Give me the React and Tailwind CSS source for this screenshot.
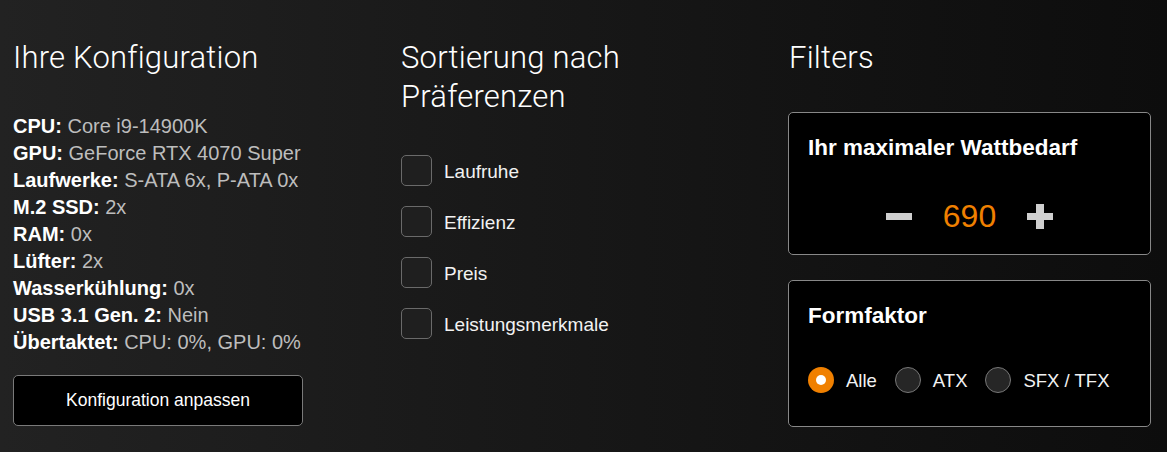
import React, { useState } from 'react';

const specs = [
  ['CPU:', 'Core i9-14900K'],
  ['GPU:', 'GeForce RTX 4070 Super'],
  ['Laufwerke:', 'S-ATA 6x, P-ATA 0x'],
  ['M.2 SSD:', '2x'],
  ['RAM:', '0x'],
  ['Lüfter:', '2x'],
  ['Wasserkühlung:', '0x'],
  ['USB 3.1 Gen. 2:', 'Nein'],
  ['Übertaktet:', 'CPU: 0%, GPU: 0%'],
];

const prefs = ['Laufruhe', 'Effizienz', 'Preis', 'Leistungsmerkmale'];
const forms = ['Alle', 'ATX', 'SFX / TFX'];

const titleFont = { fontFamily: 'Roboto, "Liberation Sans", sans-serif' };

export default function App() {
  const [checked, setChecked] = useState({});
  const [watt, setWatt] = useState(690);
  const [form, setForm] = useState('Alle');

  return (
    <div
      className="min-h-screen h-[452px] bg-gradient-to-r from-[#222222] via-[#171717] to-[#0d0d0d] text-white grid grid-cols-3"
      style={{ fontFamily: '"Liberation Sans", Arial, sans-serif' }}
    >
      {/* Konfiguration */}
      <div className="pl-[13px] pt-[38px]">
        <h2 style={titleFont} className="text-[31px] font-light leading-[39px] tracking-[0.2px]">
          Ihre Konfiguration
        </h2>
        <div className="mt-[36px] text-[20px] leading-[27px]">
          {specs.map(([k, v]) => (
            <div key={k} className="whitespace-nowrap">
              <span className="font-bold">{k}</span>{' '}
              <span className="text-[#bdbdbd]">{v}</span>
            </div>
          ))}
        </div>
        <button className="mt-[19px] w-[290px] h-[51px] bg-black border border-[#7a7a7a] rounded-[5px] text-[17.5px] text-white">
          Konfiguration anpassen
        </button>
      </div>

      {/* Sortierung */}
      <div className="pl-[12px] pt-[38px]">
        <h2 style={titleFont} className="text-[31px] font-light leading-[39px] tracking-[0.2px]">
          Sortierung nach
          <br />
          Präferenzen
        </h2>
        <div className="mt-[39px] flex flex-col gap-[19.5px]">
          {prefs.map((p) => (
            <label key={p} className="flex items-center gap-[12px] cursor-pointer">
              <span
                onClick={() => setChecked({ ...checked, [p]: !checked[p] })}
                className={`w-[31px] h-[31px] rounded-[5px] border border-[#6a6a6a] ${checked[p] ? 'bg-[#f08000]' : 'bg-[#1f1f1f]'}`}
              />
              <span className="text-[19px] text-[#f2f2f2] pt-[3px]">{p}</span>
            </label>
          ))}
        </div>
      </div>

      {/* Filters */}
      <div className="pl-[11px] pt-[38px]">
        <h2 style={titleFont} className="text-[31px] font-light leading-[39px] tracking-[0.2px]">
          Filters
        </h2>
        <div className="mt-[35px] -ml-[1px] w-[363px] h-[143px] bg-black border border-[#888888] rounded-[5px] pl-[19px] pt-[21px]">
          <div className="text-[22.5px] font-bold leading-[27px]">Ihr maximaler Wattbedarf</div>
          <div className="mt-[40px] h-[30px] flex items-center justify-center gap-[31px] pr-[19px]">
            <button onClick={() => setWatt(watt - 10)} className="w-[26px] h-[26px] flex items-center justify-center">
              <span className="block w-[26px] h-[7px] bg-[#cfcfcf]" />
            </button>
            <span className="text-[32px] text-[#f08000] leading-none">{watt}</span>
            <button onClick={() => setWatt(watt + 10)} className="relative w-[26px] h-[25px]">
              <span className="absolute left-0 top-[9px] w-[26px] h-[7px] bg-[#cfcfcf]" />
              <span className="absolute top-0 left-[9px] w-[8px] h-[25px] bg-[#cfcfcf]" />
            </button>
          </div>
        </div>
        <div className="mt-[25px] -ml-[1px] w-[363px] h-[147px] bg-black border border-[#888888] rounded-[5px] pl-[19px] pt-[21px]">
          <div className="text-[22.5px] font-bold leading-[27px]">Formfaktor</div>
          <div className="mt-[36px] flex items-center">
            {forms.map((f) => (
              <label key={f} onClick={() => setForm(f)} className="flex items-center mr-[18px] cursor-pointer">
                {form === f ? (
                  <span className="w-[26px] h-[26px] rounded-full bg-[#f08000] flex items-center justify-center">
                    <span className="w-[10px] h-[10px] rounded-full bg-white" />
                  </span>
                ) : (
                  <span className="w-[26px] h-[26px] rounded-full bg-[#262626] border border-[#777777]" />
                )}
                <span className="ml-[12px] text-[18.5px] text-[#f2f2f2] pt-[2px]">{f}</span>
              </label>
            ))}
          </div>
        </div>
      </div>
    </div>
  );
}
